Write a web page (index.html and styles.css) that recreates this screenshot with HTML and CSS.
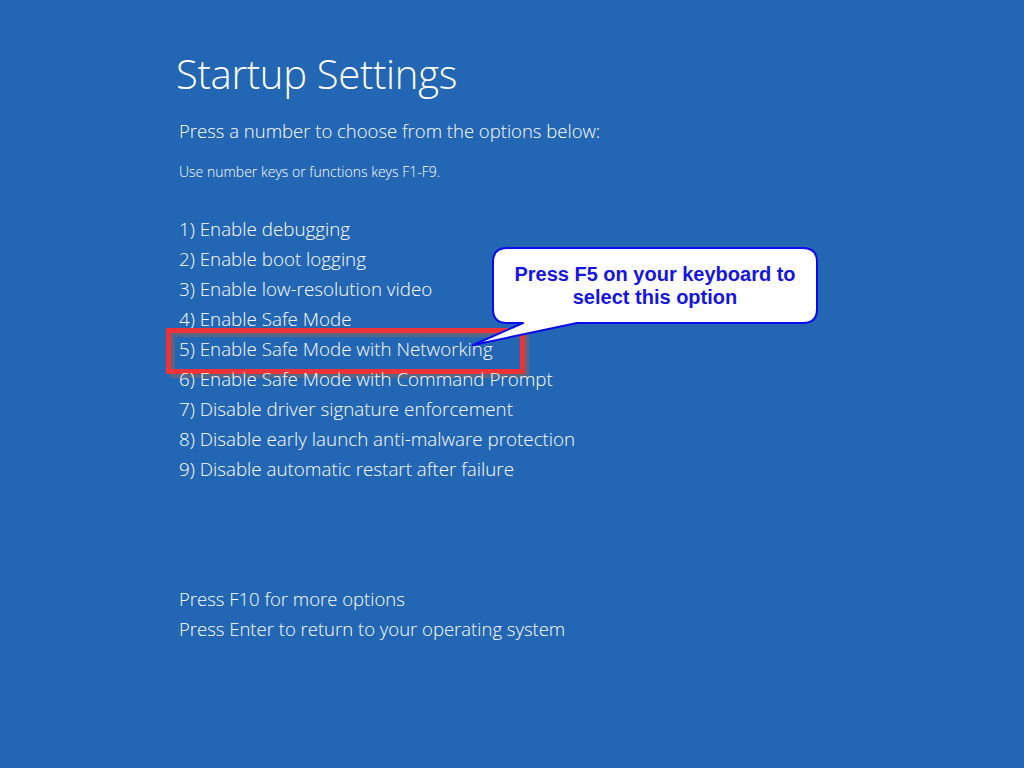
FILE: index.html
```html
<!DOCTYPE html>
<html lang="en">
<head>
<meta charset="utf-8">
<title>Startup Settings</title>
<link rel="stylesheet" href="styles.css">
</head>
<body>
<main class="screen">
  <h1 class="title">Startup Settings</h1>
  <p class="lead">Press a number to choose from the options below:</p>
  <p class="hint">Use number keys or functions keys F1-F9.</p>
  <ol class="options">
    <li>1) Enable debugging</li>
    <li>2) Enable boot logging</li>
    <li>3) Enable low-resolution video</li>
    <li>4) Enable Safe Mode</li>
    <li class="picked">5) Enable Safe Mode with Networking</li>
    <li>6) Enable Safe Mode with Command Prompt</li>
    <li>7) Disable driver signature enforcement</li>
    <li>8) Disable early launch anti-malware protection</li>
    <li>9) Disable automatic restart after failure</li>
  </ol>
  <div class="footer">
    <p>Press F10 for more options</p>
    <p>Press Enter to return to your operating system</p>
  </div>
  <div class="callout">
    <svg class="bubble" width="350" height="104" viewBox="0 0 350 104">
      <path d="M37,2 H333 Q347,2 347,16 V63 Q347,77 333,77 H107 L3,99 L53,77 H37 Q23,77 23,63 V16 Q23,2 37,2 Z" fill="#ffffff" stroke="#0a0af0" stroke-width="2" stroke-linejoin="round"/>
    </svg>
    <div class="callout-text">Press F5 on your keyboard to<br>select this option</div>
  </div>
</main>
</body>
</html>
```
FILE: styles.css
```css
html, body {
  margin: 0;
  padding: 0;
  background: #2366b4;
}
.screen {
  position: relative;
  width: 1024px;
  height: 768px;
  box-sizing: border-box;
  padding: 46px 0 0 179px;
  color: #ffffff;
  font-family: "Open Sans", "Noto Sans", sans-serif;
  font-weight: 300;
}
.title {
  margin: 0 0 0 -3px;
  font-size: 40px;
  font-weight: 300;
  line-height: 56px;
  letter-spacing: -0.3px;
}
.lead {
  margin: 14px 0 0 0;
  font-size: 18.5px;
  line-height: 30px;
}
.hint {
  margin: 16px 0 0 0;
  font-size: 14px;
  line-height: 20px;
}
.options {
  list-style: none;
  margin: 32px 0 0 0;
  padding: 0;
  font-size: 18.8px;
  line-height: 30px;
}
.options li {
  position: relative;
}
.picked::before {
  content: "";
  position: absolute;
  left: -13px;
  top: -6px;
  width: 349px;
  height: 36px;
  border: 5px solid #ee3338;
  box-shadow: 4px 4px 0 rgba(105, 105, 120, 0.75), inset 4px 4px 0 rgba(105, 105, 120, 0.75);
}
.footer {
  margin-top: 100px;
  font-size: 18.5px;
  line-height: 30px;
}
.footer p {
  margin: 0;
}
.callout {
  position: absolute;
  left: 470px;
  top: 246px;
  width: 350px;
  height: 104px;
}
.bubble {
  position: absolute;
  left: 0;
  top: 0;
  display: block;
}
.callout-text {
  position: absolute;
  left: 23px;
  top: 2px;
  width: 324px;
  height: 75px;
  display: flex;
  align-items: center;
  justify-content: center;
  text-align: center;
  font-family: "Liberation Sans", Arial, sans-serif;
  font-weight: 700;
  font-size: 20px;
  line-height: 23px;
  color: #1414e6;
}
```
